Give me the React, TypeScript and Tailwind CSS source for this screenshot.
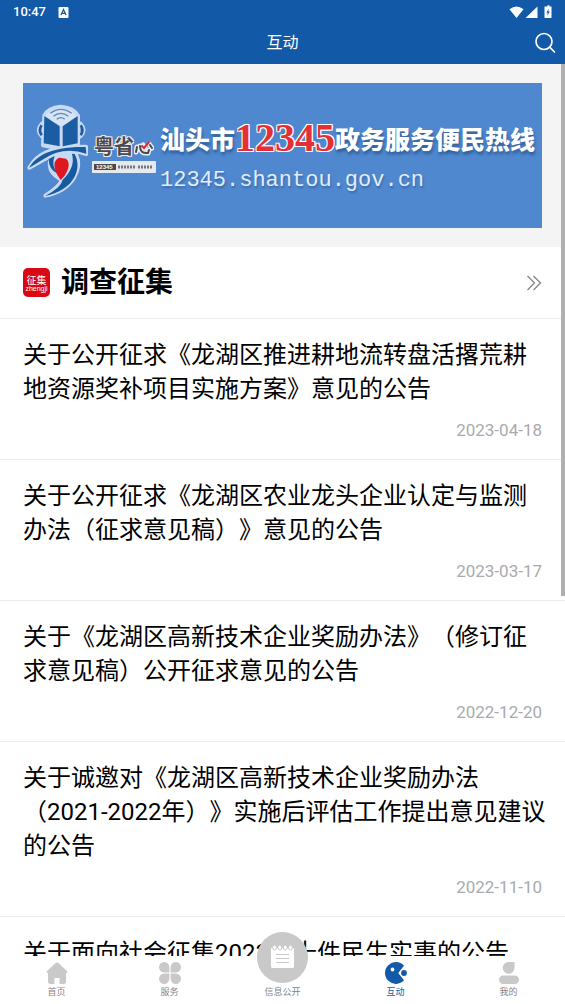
import React from "react";

const notices: { lines: string[]; date?: string }[] = [
  { lines: ["关于公开征求《龙湖区推进耕地流转盘活撂荒耕", "地资源奖补项目实施方案》意见的公告"], date: "2023-04-18" },
  { lines: ["关于公开征求《龙湖区农业龙头企业认定与监测", "办法（征求意见稿）》意见的公告"], date: "2023-03-17" },
  { lines: ["关于《龙湖区高新技术企业奖励办法》（修订征", "求意见稿）公开征求意见的公告"], date: "2022-12-20" },
  { lines: ["关于诚邀对《龙湖区高新技术企业奖励办法", "（2021-2022年）》实施后评估工作提出意见建议", "的公告"], date: "2022-11-10" },
  { lines: ["关于面向社会征集2023年十件民生实事的公告"] },
];

function StatusBar() {
  return (
    <div className="flex h-6 items-center justify-between pl-[13px] pr-3">
      <div className="flex items-center gap-3">
        <span className="text-[13px] leading-6 font-medium">10:47</span>
        <svg className="h-[11px] w-[11px]" viewBox="0 0 10 11">
          <rect width="10" height="11" rx="1" fill="#fff" />
          <path d="M2.5 8 L5 2.6 L7.5 8 M3.5 6.4 H6.5" fill="none" stroke="#1259a7" strokeWidth="1.3" />
        </svg>
      </div>
      <svg className="h-[14px] w-[44px]" viewBox="0 0 44 14" fill="#fff">
        <path d="M0.5 4.2 Q7.5 -1 14.5 4.2 L7.5 13 Z" />
        <path d="M28.500 1.500 V13 H16.500 Z" />
        <path d="M37 1.600 H38.500 V0.300 H40.500 V1.600 H42.500 V13 H35.500 V1.600 Z" />
        <path d="M39.8 3.6 L37.4 7.8 H38.8 L38.2 11 L40.8 6.6 H39.3 Z" fill="#1259a7" />
      </svg>
    </div>
  );
}

function HotlineLogo() {
  return (
    <svg className="h-[95px] w-[61px] shrink-0" viewBox="36 84 183 285" fill="none">
      <path d="M81 144 Q64 162 81 180 M196 144 Q213 162 196 180" stroke="#c9d9f2" strokeWidth="14" strokeLinecap="round" />
      <g stroke="#c9d9f2" strokeWidth="12" strokeLinejoin="round" fill="#c9d9f2">
        <path d="M88 119 Q100 94 137 92 Q174 94 189 119 V204 L139 219 L84 208 Z" />
        <path d="M43 275 C64 235 104 211 213 212 L214 234 Q145 211 90 249 Z" />
        <path d="M183 235 C201 273 181 340 91 359 Q132 333 141 312 Q88 284 112 238 Z" />
      </g>
      <path d="M80 148 Q69 163 80 178 M197 148 Q208 163 197 178" stroke="#1d5b9e" strokeWidth="8" />
      <path d="M92 121 Q108 98 137 97 Q170 99 185 121 L139 150 Z" fill="#d7e4f4" />
      <path d="M106 112 Q137 88 170 112 M115 121 Q137 103 160 121 M125 130 Q138 120 149 130" stroke="#5b89bd" strokeWidth="4" />
      <path d="M88 120 L134 151 V211 L86 202 Z M188 120 L143 151 V211 L188 202 Z" fill="#1b5da3" />
      <path d="M43 275 C61 242 105 211 212 213 L214 233 Q145 210 86 249 Z" fill="#165aa0" />
      <path d="M101 249 Q101 281 128 293 Q107 267 119 240 Z" fill="#165aa0" />
      <path d="M179 234 C202 275 181 342 90 360 Q139 334 143 311 Q182 274 171 233 Z" fill="#165aa0" />
      <path d="M137 312 Q114 281 119 260 Q127 240 143 247 Q165 246 160 276 Q153 298 137 312 Z" fill="#df1720" />
    </svg>
  );
}

function Banner() {
  return (
    <a href="#hotline" className="flex h-[145px] items-center overflow-hidden bg-[#4f88ce] pl-1 text-white">
      <div className="flex items-center pb-2">
        <HotlineLogo />
        <div className="ml-1 w-[64px] shrink-0">
          <div className="text-center font-['Noto_Sans_CJK_SC'] text-[20px] leading-[30px] font-bold whitespace-nowrap text-[#4c4949] [text-shadow:1px_1px_0_#e8edf5,-1px_-1px_0_#e8edf5,1px_-1px_0_#e8edf5,-1px_1px_0_#e8edf5]">
            粤省
            <svg className="inline-block h-5 w-5 align-middle" viewBox="0 0 20 20" fill="none" strokeLinecap="round">
              <path d="M3 9 L2 14 M6 8 Q6 16 14 15 L15 12 M9 7 L11 10 M15 6 L18 10" stroke="#e8edf5" strokeWidth="5" />
              <path d="M3 9 L2 14 M6 8 Q6 16 14 15 L15 12 M16 7 L18 10" stroke="#4c4949" strokeWidth="2" />
              <path d="M8 8 L10 10 L15 4" stroke="#df2633" strokeWidth="2" />
            </svg>
          </div>
          <svg className="h-[12px] w-[64px]" viewBox="0 0 64 12">
            <rect width="64" height="12" rx="1" fill="#e6e9ef" />
            <rect x="2" y="3" width="22" height="6" fill="#4c4949" />
            <text x="4" y="8" fontSize="6" fontFamily="Liberation Sans" fontWeight="700" fill="#fff">12345</text>
            <path d="M26 6 H43 M46 6 H60" stroke="#777" strokeWidth="3" strokeDasharray="2 1" />
          </svg>
        </div>
      </div>
      <div className="ml-1 flex flex-col pt-2 whitespace-nowrap">
        <div className="flex h-[42px] items-center font-['Noto_Sans_CJK_SC'] text-[25px] leading-[42px] font-black [text-shadow:1px_3px_3px_#315f9c]">
          <span>汕头市</span>
          <span className="font-['Liberation_Serif'] text-[40px] font-bold text-[#e52f37] [text-shadow:1px_1px_0_#fff,-1px_-1px_0_#fff,1px_-1px_0_#fff,-1px_1px_0_#fff]">12345</span>
          <span>政务服务便民热线</span>
        </div>
        <div className="h-[44px] font-['Liberation_Mono'] text-[22px] leading-[44px] text-[#e1edff] [text-shadow:1px_2px_2px_#3a69a8]">
          12345.shantou.gov.cn
        </div>
      </div>
    </a>
  );
}

function HomeIcon() {
  return (
    <svg className="h-[22px] w-[22px]" viewBox="0 0 22 22" fill="#c9c9c9">
      <path d="M11 0.500 Q12 0.500 13 1.500 L21 9 Q22.300 11 20 11 V19.500 Q20 22 17.500 22 H13.500 V16 H8.500 V22 H4.500 Q2 22 2 19.500 V11 Q-0.300 11 1 9 L9 1.500 Q10 0.500 11 0.500 Z" />
    </svg>
  );
}

function ServiceIcon() {
  return (
    <svg className="h-[22px] w-[22px]" viewBox="0 0 22 22" fill="#c9c9c9">
      <path d="M5.200 0 A5.200 5.200 0 0 1 10.400 5.200 V10.400 H5.200 A5.200 5.200 0 0 1 5.200 0 Z" />
      <path d="M16.800 0 A5.200 5.200 0 0 0 11.600 5.200 V10.400 H16.800 A5.200 5.200 0 0 0 16.800 0 Z" />
      <path d="M5.200 22 A5.200 5.200 0 0 0 10.400 16.800 V11.600 H5.200 A5.200 5.200 0 0 0 5.200 22 Z" />
      <path d="M16.800 22 A5.200 5.200 0 0 1 11.600 16.800 V11.600 H16.800 A5.200 5.200 0 0 1 16.800 22 Z" />
    </svg>
  );
}

function InteractIcon() {
  return (
    <svg className="h-[22px] w-[22px]" viewBox="0 0 22 22">
      <path d="M19 3.700 A10.900 10.900 0 1 0 19 18.300 L14 12 Q13 11 14 10 Z" fill="#1259a7" />
      <circle cx="7.500" cy="7.500" r="1.900" fill="#fff" />
      <circle cx="19" cy="11" r="2.900" fill="#1259a7" />
    </svg>
  );
}

function MineIcon() {
  return (
    <svg className="h-[22px] w-[22px]" viewBox="0 0 22 22" fill="#c9c9c9">
      <path d="M11 0 H16.500 V6 A5.900 5.900 0 1 1 11 0 Z" />
      <rect x="1" y="13.500" width="20" height="8.500" rx="4.200" />
    </svg>
  );
}

function Tab({ label, icon, active }: { label: string; icon: React.ReactNode; active?: boolean }) {
  return (
    <a href={"#" + label} aria-current={active ? "page" : undefined} className={`flex flex-col items-center pt-[6px] ${active ? "text-[#1259a7]" : "text-[#858585]"}`}>
      {icon}
      <span className="mt-[2px] text-[9px] leading-[13px]">{label}</span>
    </a>
  );
}

export default function App() {
  return (
    <div className="flex h-screen flex-col bg-white font-['Roboto','Noto_Sans_CJK_SC',sans-serif] text-black [text-spacing-trim:space-all]">
      <header className="shrink-0 bg-[#1259a7] text-white">
        <StatusBar />
        <div className="grid h-10 grid-cols-[1fr_auto_1fr] items-center pr-[9px] pl-[9px] pb-[2px]">
          <span />
          <h1 className="text-[16px] leading-6">互动</h1>
          <button aria-label="搜索" className="justify-self-end">
            <svg className="h-[22px] w-[22px]" viewBox="0 0 22 22" fill="none" stroke="#fff" strokeWidth="1.700" strokeLinecap="round">
              <circle cx="10" cy="9.500" r="8" />
              <path d="M15.700 15.200 L20.500 20" />
            </svg>
          </button>
        </div>
      </header>

      <main className="relative min-h-0 flex-1 overflow-hidden">
        <div className="bg-[#f4f4f4] px-[23px] py-[19px]">
          <Banner />
        </div>
        <section>
          <div className="flex h-[71px] items-center px-[23px]">
            <svg className="h-[29px] w-[27px]" viewBox="0 0 27 29">
              <rect width="27" height="29" rx="5" fill="#d90816" />
              <text x="13.500" y="15.500" textAnchor="middle" fontSize="10" fontFamily="Noto Sans CJK SC" fill="#fff">征集</text>
              <text x="13.500" y="23" textAnchor="middle" fontSize="7" fontFamily="Liberation Sans" fill="#fff">zhengji</text>
            </svg>
            <h2 className="ml-[11px] text-[28px] leading-10 font-bold">调查征集</h2>
            <a href="#more" aria-label="更多" className="ml-auto">
              <svg className="h-4 w-4" viewBox="0 0 16 16" fill="none" stroke="#858585" strokeWidth="1.300">
                <path d="M1.500 1 L8.500 8 L1.500 15 M7.500 1 L14.500 8 L7.500 15" />
              </svg>
            </a>
          </div>
          <ul>
            {notices.map((n) => (
              <li key={n.lines[0]} className="border-t border-[#ebebeb]">
                <a href="#notice" className="block px-[23px] pt-[19px] pb-[19px]">
                  <h3 className="text-[24px] leading-[34px] whitespace-nowrap">
                    {n.lines.map((line) => (
                      <span key={line} className="block">{line}</span>
                    ))}
                  </h3>
                  {n.date && <time className="mt-[14px] block text-right text-[17px] leading-5 text-[#a9aaae]">{n.date}</time>}
                </a>
              </li>
            ))}
          </ul>
        </section>
        <div className="absolute top-0 right-0 h-[532px] w-1 bg-[#b0b0b0]" />
      </main>

      <nav className="relative grid h-12 shrink-0 grid-cols-5 bg-white">
        <Tab label="首页" icon={<HomeIcon />} />
        <Tab label="服务" icon={<ServiceIcon />} />
        <a href="#信息公开" className="flex flex-col items-center justify-end pb-[5px] text-[#858585]">
          <svg className="-mt-6 h-[51px] w-[51px]" viewBox="0 0 51 51">
            <circle cx="25.500" cy="25.500" r="25.500" fill="#c9c9c9" />
            <path d="M14 16 H37 V34.500 Q37 36 35.500 36 H15.500 Q14 36 14 34.500 Z" fill="#fff" />
            <g fill="#fff" stroke="#c9c9c9" strokeWidth="1">
              <ellipse cx="17.500" cy="15.500" rx="1.900" ry="2.600" />
              <ellipse cx="22.800" cy="15.500" rx="1.900" ry="2.600" />
              <ellipse cx="28.200" cy="15.500" rx="1.900" ry="2.600" />
              <ellipse cx="33.500" cy="15.500" rx="1.900" ry="2.600" />
            </g>
            <path d="M19 22.500 H32 M19 26.500 H32 M19 30.500 H32" stroke="#c9c9c9" strokeWidth="1.200" />
          </svg>
          <span className="mt-[3px] text-[9px] leading-[13px]">信息公开</span>
        </a>
        <Tab label="互动" icon={<InteractIcon />} active />
        <Tab label="我的" icon={<MineIcon />} />
      </nav>
    </div>
  );
}
